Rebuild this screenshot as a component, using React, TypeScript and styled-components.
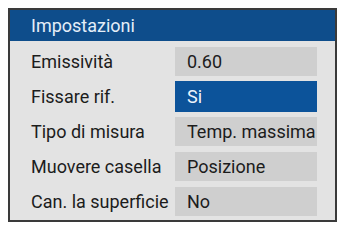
import React from "react";
import styled, { createGlobalStyle } from "styled-components";

const Global = createGlobalStyle`
  html, body { margin: 0; padding: 0; background: #ffffff; }
  body { width: 340px; height: 232px; overflow: hidden; }
`;

const Panel = styled.div`
  margin: 8px 0 0 8px;
  width: 325px;
  border: 2px solid #3a3a3a;
  background: #e3e3e3;
  font-family: Roboto, "Liberation Sans", sans-serif;
  font-size: 18px;
  color: #1c1c1c;
  box-sizing: content-box;
`;

const Header = styled.div`
  height: 31px;
  display: flex;
  align-items: center;
  padding-left: 21px;
  background: #0e4d8b;
  color: #e4eef8;
`;

const List = styled.div`
  display: grid;
  grid-template-columns: 144px 142px;
  grid-auto-rows: 35px;
  padding: 3px 18px 1px 21px;
`;

const Label = styled.div`
  display: flex;
  align-items: center;
  white-space: nowrap;
  overflow: visible;
  position: relative;
  z-index: 1;
`;

const Cell = styled.div`
  display: flex;
  align-items: center;
`;

const Value = styled.div<{ $selected?: boolean }>`
  width: 100%;
  height: ${(p) => (p.$selected ? 31 : 29)}px;
  display: flex;
  align-items: center;
  padding-left: 12px;
  box-sizing: border-box;
  white-space: nowrap;
  overflow: hidden;
  background: ${(p) => (p.$selected ? "#0c539a" : "#cfcfcf")};
  color: ${(p) => (p.$selected ? "#eef4fb" : "#1c1c1c")};
`;

const rows = [
  { label: "Emissività", value: "0.60" },
  { label: "Fissare rif.", value: "Si", selected: true },
  { label: "Tipo di misura", value: "Temp. massima" },
  { label: "Muovere casella", value: "Posizione" },
  { label: "Can. la superficie", value: "No" },
];

export default function App() {
  return (
    <>
      <Global />
      <Panel>
        <Header>Impostazioni</Header>
        <List>
          {rows.map((r) => (
            <React.Fragment key={r.label}>
              <Label>{r.label}</Label>
              <Cell>
                <Value $selected={r.selected}>{r.value}</Value>
              </Cell>
            </React.Fragment>
          ))}
        </List>
      </Panel>
    </>
  );
}
